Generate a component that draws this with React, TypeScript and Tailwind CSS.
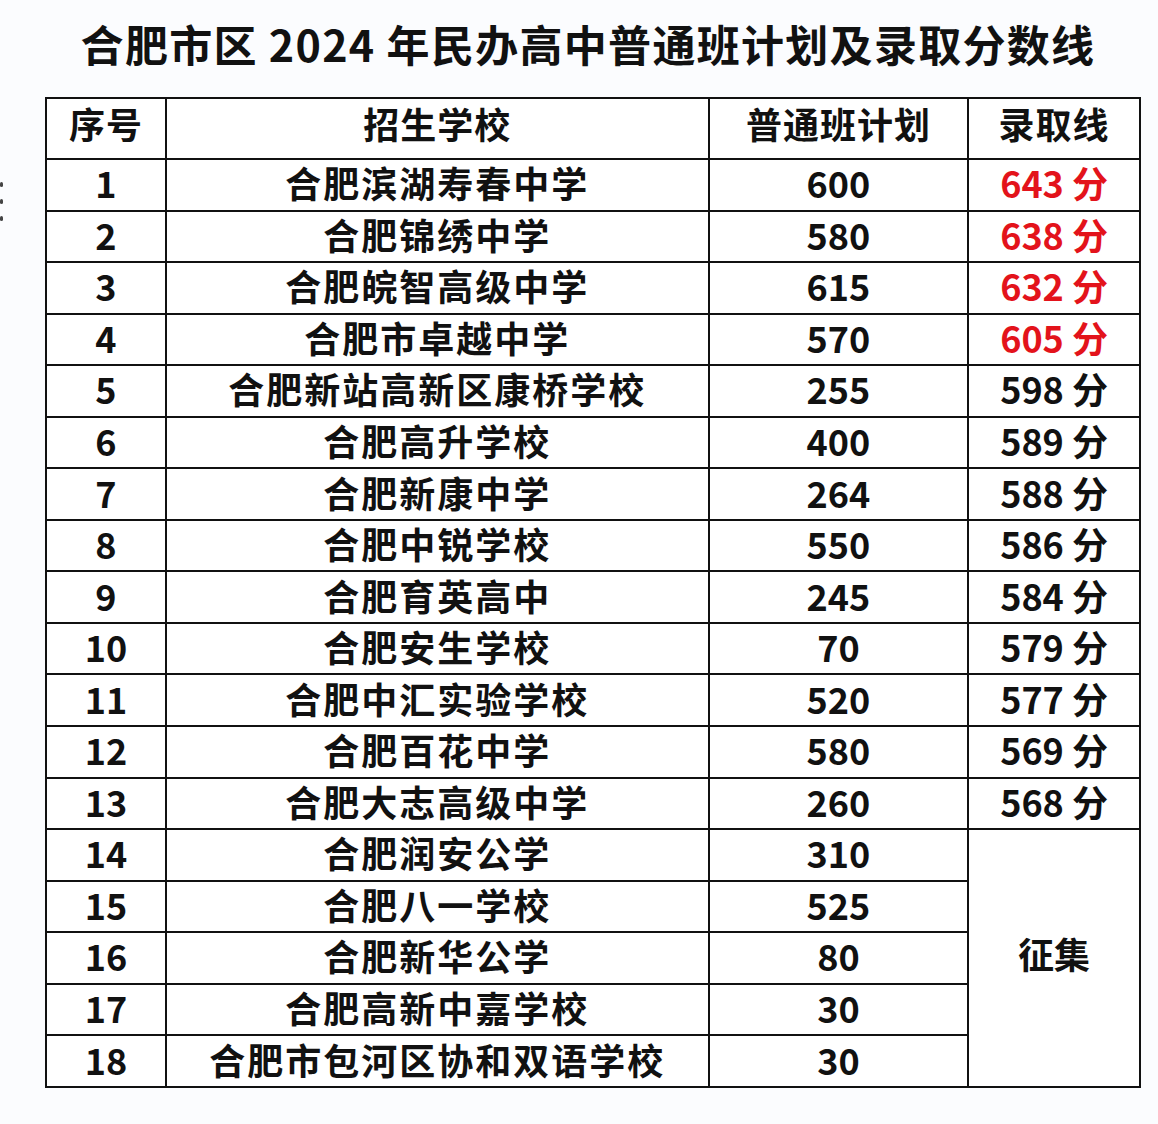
import React from 'react';

type Row = { no: number; school: string; plan: number; score?: number; red?: boolean };

const rows: Row[] = [
  { no: 1, school: '合肥滨湖寿春中学', plan: 600, score: 643, red: true },
  { no: 2, school: '合肥锦绣中学', plan: 580, score: 638, red: true },
  { no: 3, school: '合肥皖智高级中学', plan: 615, score: 632, red: true },
  { no: 4, school: '合肥市卓越中学', plan: 570, score: 605, red: true },
  { no: 5, school: '合肥新站高新区康桥学校', plan: 255, score: 598 },
  { no: 6, school: '合肥高升学校', plan: 400, score: 589 },
  { no: 7, school: '合肥新康中学', plan: 264, score: 588 },
  { no: 8, school: '合肥中锐学校', plan: 550, score: 586 },
  { no: 9, school: '合肥育英高中', plan: 245, score: 584 },
  { no: 10, school: '合肥安生学校', plan: 70, score: 579 },
  { no: 11, school: '合肥中汇实验学校', plan: 520, score: 577 },
  { no: 12, school: '合肥百花中学', plan: 580, score: 569 },
  { no: 13, school: '合肥大志高级中学', plan: 260, score: 568 },
  { no: 14, school: '合肥润安公学', plan: 310 },
  { no: 15, school: '合肥八一学校', plan: 525 },
  { no: 16, school: '合肥新华公学', plan: 80 },
  { no: 17, school: '合肥高新中嘉学校', plan: 30 },
  { no: 18, school: '合肥市包河区协和双语学校', plan: 30 },
];

const cell = 'border-2 border-[#111] text-center align-middle px-0 pt-0 pb-[5px] leading-none';
const head = 'border-2 border-[#111] text-center align-middle px-0 pt-0 pb-[11px] leading-none tracking-[1px]';

export default function App() {
  return (
    <div
      className="relative w-[1158px] h-[1124px] bg-[#fbfcfe] text-[#111] overflow-hidden"
      style={{ fontFamily: '"Noto Sans CJK SC", "Noto Sans", sans-serif' }}
    >
      {/* scan marks on the left edge */}
      <div className="absolute left-0 top-[182px] flex flex-col gap-[12px]">
        <div className="w-[3px] h-[5px] bg-[#444] rounded-sm" />
        <div className="w-[3px] h-[5px] bg-[#444] rounded-sm" />
        <div className="w-[3px] h-[5px] bg-[#444] rounded-sm" />
      </div>

      <h1 className="pt-[16px] pl-[18px] h-[97px] text-center text-[43px] font-bold leading-[54px] tracking-[1.3px]">
        合肥市区 2024 年民办高中普通班计划及录取分数线
      </h1>

      <table className="ml-[45px] w-[1096px] border-collapse bg-white text-[36px] font-bold">
        <colgroup>
          <col className="w-[120px]" />
          <col className="w-[544px]" />
          <col className="w-[260px]" />
          <col className="w-[172px]" />
        </colgroup>
        <thead>
          <tr className="h-[61px]">
            <th className={head}>序号</th>
            <th className={head}>招生学校</th>
            <th className={head}>普通班计划</th>
            <th className={head}>录取线</th>
          </tr>
        </thead>
        <tbody>
          {rows.map((r) => (
            <tr key={r.no} className="h-[51.55px]">
              <td className={cell}>{r.no}</td>
              <td className={`${cell} tracking-[2px]`}>{r.school}</td>
              <td className={cell}>{r.plan}</td>
              {r.score !== undefined ? (
                <td className={`${cell} ${r.red ? 'text-[#e3131b]' : ''}`}>{r.score} 分</td>
              ) : r.no === 14 ? (
                <td className={`${cell} pb-[10px]`} rowSpan={5}>征集</td>
              ) : null}
            </tr>
          ))}
        </tbody>
      </table>
    </div>
  );
}
